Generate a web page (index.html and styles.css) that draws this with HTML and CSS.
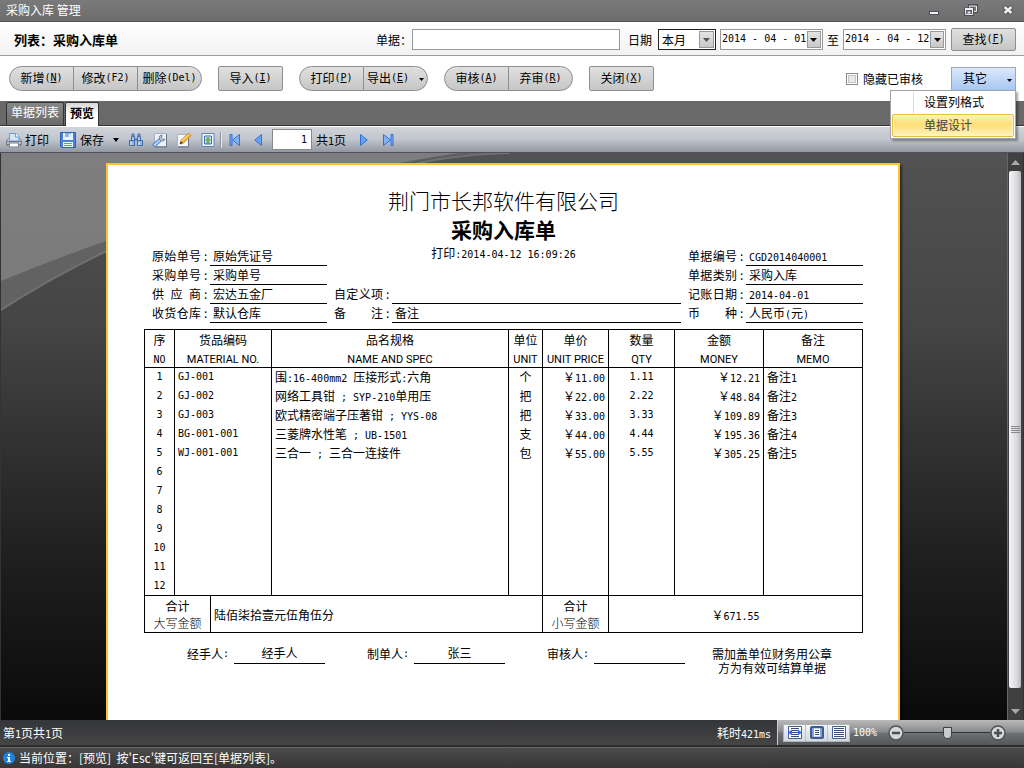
FILE: index.html
```html
<!DOCTYPE html>
<html lang="zh-CN">
<head>
<meta charset="utf-8">
<title>采购入库 管理</title>
<link rel="stylesheet" href="styles.css">
</head>
<body>
<div class="window">
  <header class="titlebar">
    <span class="titlebar-text">采购入库 管理</span>
    <div class="window-buttons">
      <button type="button" aria-label="最小化"><svg width="12" height="12" viewBox="0 0 12 12"><rect x="1.500" y="7.500" width="9" height="3" fill="#f4f4f4" stroke="#4c4c58"/></svg></button>
      <button type="button" aria-label="还原"><svg width="14" height="12" viewBox="0 0 14 12"><path d="M5.500 1.500h7v6h-7z" fill="#777" stroke="#4c4c58" stroke-width="3"/><path d="M5.500 2h7v5.500h-7z" fill="#777" stroke="#eee"/><path d="M1.500 5h7v5.500h-7z" fill="#777" stroke="#4c4c58" stroke-width="3"/><path d="M1.500 5h7v5.500h-7z" fill="#5b5b66" stroke="#eee"/><path d="M1 5h8M3.500 8.500h3" stroke="#eee" stroke-width="2"/></svg></button>
      <button type="button" aria-label="关闭"><svg width="12" height="12" viewBox="0 0 12 12"><path d="M2 2.500l8 7M10 2.500l-8 7" stroke="#4c4c58" stroke-width="4"/><path d="M2.500 3l7 6M9.500 3l-7 6" stroke="#f4f4f4" stroke-width="2.400"/></svg></button>
    </div>
  </header>

  <form class="filterbar">
    <h1 class="filter-title">列表：采购入库单</h1>
    <label for="bill">单据：</label>
    <input class="bill-input" id="bill" type="text">
    <label class="date-label" for="range">日期</label>
    <span class="picker picker-dark">
      <select id="range"><option>本月</option></select>
      <span class="picker-arrow"><svg width="7" height="4"><path d="M0 0h7L3.500 4z" fill="#555"/></svg></span>
    </span>
    <span class="picker picker-date">
      <input class="m" type="text" value="2014 - 04 - 01" aria-label="开始日期">
      <button type="button" class="drop" aria-label="选择开始日期"><svg width="7" height="4"><path d="M0 0h7L3.500 4z"/></svg></button>
    </span>
    <span>至</span>
    <span class="picker picker-date">
      <input class="m" type="text" value="2014 - 04 - 12" aria-label="结束日期">
      <button type="button" class="drop" aria-label="选择结束日期"><svg width="7" height="4"><path d="M0 0h7L3.500 4z"/></svg></button>
    </span>
    <button type="button" class="btn find">查找<span class="m">(<u>F</u>)</span></button>
  </form>

  <div class="actionbar">
    <div class="group">
      <button type="button" class="btn">新增<span class="m">(<u>N</u>)</span></button>
      <button type="button" class="btn">修改<span class="m">(F2)</span></button>
      <button type="button" class="btn">删除<span class="m">(Del)</span></button>
    </div>
    <button type="button" class="btn">导入<span class="m">(<u>I</u>)</span></button>
    <div class="group">
      <button type="button" class="btn">打印<span class="m">(<u>P</u>)</span></button>
      <button type="button" class="btn btn-drop">导出<span class="m">(<u>E</u>)</span><svg width="5" height="3"><path d="M0 0h5L2.500 3z"/></svg></button>
    </div>
    <div class="group">
      <button type="button" class="btn">审核<span class="m">(<u>A</u>)</span></button>
      <button type="button" class="btn">弃审<span class="m">(<u>R</u>)</span></button>
    </div>
    <button type="button" class="btn">关闭<span class="m">(<u>X</u>)</span></button>
    <label class="hide-audited"><input type="checkbox">隐藏已审核</label>
    <div class="other">
      <button type="button" class="other-btn">其它<svg width="5" height="3"><path d="M0 0h5L2.500 3z"/></svg></button>
      <div class="menu">
        <button type="button" class="menu-item">设置列格式</button>
        <button type="button" class="menu-item menu-item-active">单据设计</button>
      </div>
    </div>
  </div>

  <nav class="tabs">
    <button type="button" class="tab">单据列表</button>
    <button type="button" class="tab tab-active">预览</button>
  </nav>

  <div class="previewbar">
    <button type="button" class="tool tool-print">
      <svg width="16" height="16" viewBox="0 0 16 16"><rect x="1" y="7" width="14" height="7" rx="1.500" fill="#e9edf2" stroke="#69717e"/><path d="M3.500 9V1.500h6.500l3 3V9z" fill="#d4e6fa" stroke="#6b9ad2"/><path d="M9.500 1.500v3.500H13" fill="#fff" stroke="#6b9ad2"/><path d="M0.500 9.500h15v3H.500z" fill="#b8c0c9" stroke="#727b86"/><path d="M3.500 11h9v4h-9z" fill="#fff" stroke="#7b838e"/></svg>打印</button>
    <button type="button" class="tool tool-save">
      <svg width="16" height="16" viewBox="0 0 16 16"><path d="M.500 .500h15v15h-14l-1-1z" fill="#4c82d6" stroke="#2f62b5"/><path d="M3 1h10v7H3z" fill="#eaf2fc"/><path d="M5 1h6v4H5z" fill="#8fb1e4"/><path d="M9 2h1.500v3H9z" fill="#fff"/><path d="M3 10h10v5H3z" fill="#eef6e8"/><path d="M4 11.500h8M4 13.500h8" stroke="#62b04b"/></svg>保存</button>
    <button type="button" class="tool-caret" aria-label="保存选项"><svg width="6" height="4"><path d="M0 0h6L3 4z"/></svg></button>
    <button type="button" class="tool-icon" aria-label="查找"><svg width="16" height="16" viewBox="0 0 16 16"><path d="M4 2h2v2H4zM10 2h2v2h-2z" fill="#9dc0ea" stroke="#416da8"/><path d="M3.500 4.500h3v4h-3zM9.500 4.500h3v4h-3z" fill="#a9c9ef" stroke="#416da8"/><path d="M1.500 8.500h5v5h-5zM9.500 8.500h5v5h-5z" fill="#8fb6e6" stroke="#416da8"/><path d="M6.500 6.500h3v2h-3z" fill="#4778b7"/><path d="M3 10v3M11 10v3" stroke="#e2effc"/></svg></button>
    <button type="button" class="tool-icon" aria-label="参数"><svg width="16" height="16" viewBox="0 0 16 16"><path d="M2.500 1.500h12v13h-12z" fill="#edf2f9" stroke="#a3b0c6"/><path d="M14.500 2v13H3" fill="none" stroke="#66758e"/><path d="M2.500 13L7.500 8.500" stroke="#4b7fc9" stroke-width="4" stroke-linecap="round"/><path d="M2.500 13L7.500 8.500" stroke="#b7d6fa" stroke-width="2" stroke-linecap="round"/><path d="M10 3a3 3 0 1 0 3 4l-2 .500-1.500-1.500z" fill="#c5cdd6" stroke="#778391"/></svg></button>
    <button type="button" class="tool-icon" aria-label="编辑"><svg width="16" height="16" viewBox="0 0 16 16"><path d="M1.500 2.500h11v12h-11z" fill="#f5f8fc" stroke="#a3b0c6"/><path d="M12.500 6v9H2" fill="none" stroke="#66758e"/><path d="M5 8.500L12.500 1l2.500 2.500L7.500 11l-3.500 1z" fill="#f4b63f" stroke="#c98a34"/><path d="M6.500 8.500l6-6" stroke="#fde49b"/><path d="M4 12l.800-2.500 2 1.500z" fill="#222"/></svg></button>
    <button type="button" class="tool-icon" aria-label="页面设置"><svg width="14" height="16" viewBox="0 0 14 16"><path d="M1 1.500h12v13H1z" fill="#f6faff" stroke="#5e83b6"/><path d="M3.500 4h7v8h-7z" fill="#bddcf7" stroke="#3f72b0"/><path d="M7 5l2.500 4h-5z" fill="#67a32d"/><circle cx="7" cy="7.500" r="2" fill="#77b039"/><path d="M7 9v2M5 11h4" stroke="#607f2d"/></svg></button>
    <span class="separator"></span>
    <button type="button" class="tool-icon" aria-label="首页"><svg width="11" height="12" viewBox="0 0 11 12"><path d="M1 .500h2v11H1z" fill="#83b2f3" stroke="#2e6fdb"/><path d="M10.500 .500v11L3.500 6z" fill="#83b2f3" stroke="#2e6fdb"/></svg></button>
    <button type="button" class="tool-icon" aria-label="上一页"><svg width="8" height="12" viewBox="0 0 8 12"><path d="M7.500 .500v11L.800 6z" fill="#6aa2f2" stroke="#2e6fdb"/></svg></button>
    <input class="page-input m" type="text" value="1" aria-label="页码">
    <span class="page-total">共<span class="m">1</span>页</span>
    <button type="button" class="tool-icon" aria-label="下一页"><svg width="8" height="12" viewBox="0 0 8 12"><path d="M.500 .500v11L7.200 6z" fill="#6aa2f2" stroke="#2e6fdb"/></svg></button>
    <button type="button" class="tool-icon" aria-label="末页"><svg width="11" height="12" viewBox="0 0 11 12"><path d="M8 .500h2v11H8z" fill="#83b2f3" stroke="#2e6fdb"/><path d="M.500 .500v11L7.500 6z" fill="#83b2f3" stroke="#2e6fdb"/></svg></button>
  </div>

  <main class="preview">
    <svg class="backdrop" viewBox="0 0 1006 567" preserveAspectRatio="none" aria-hidden="true">
      <defs>
        <linearGradient id="dark" x1="0" y1="0" x2="0" y2="1"><stop offset="0" stop-color="#525252"/><stop offset=".3" stop-color="#454545"/><stop offset=".7" stop-color="#202020"/><stop offset="1" stop-color="#0a0a0a"/></linearGradient>
        <linearGradient id="light" gradientUnits="userSpaceOnUse" x1="0" y1="0" x2="0" y2="130"><stop offset="0" stop-color="#7e7e7e"/><stop offset="1" stop-color="#7b7b7b"/></linearGradient>
      </defs>
      <rect width="1006" height="567" fill="url(#dark)"/>
      <path d="M0 0H500Q420 0 370 20Q220 52 106 97Q50 124 0 157z" fill="#626262"/>
      <path d="M500 0Q430 2 380 18Q220 52 106 97Q50 124 0 157" fill="none" stroke="#707070" stroke-width="2"/>
      <path d="M0 0H450Q300 22 106 87Q50 107 0 128z" fill="url(#light)"/>
    </svg>
    <div class="page-area">
      <article class="paper">
        <h2 class="company">荆门市长邦软件有限公司</h2>
        <h3 class="doc-title">采购入库单</h3>
        <p class="printed">打印<span class="m">:2014-04-12 16:09:26</span></p>

        <div class="info">
          <div class="info-col info-left">
            <span class="name"><span>原始单号</span>:</span><span class="value">原始凭证号</span>
            <span class="name"><span>采购单号</span>:</span><span class="value">采购单号</span>
            <span class="name"><span>供 应 商</span>:</span><span class="value">宏达五金厂</span>
            <span class="name"><span>收货仓库</span>:</span><span class="value">默认仓库</span>
          </div>
          <div class="info-col info-mid">
            <span class="name"><span>自定义项</span>:</span><span class="value"></span>
            <span class="name"><span>备 注</span>:</span><span class="value">备注</span>
          </div>
          <div class="info-col info-right">
            <span class="name"><span>单据编号</span>:</span><span class="value"><span class="m">CGD2014040001</span></span>
            <span class="name"><span>单据类别</span>:</span><span class="value">采购入库</span>
            <span class="name"><span>记账日期</span>:</span><span class="value"><span class="m">2014-04-01</span></span>
            <span class="name"><span>币 种</span>:</span><span class="value">人民币<span class="m">(</span>元<span class="m">)</span></span>
          </div>
        </div>

        <table class="items">
          <colgroup><col class="c-no"><col class="c-sum"><col class="c-code"><col class="c-name"><col class="c-unit"><col class="c-price"><col class="c-qty"><col class="c-money"><col class="c-memo"></colgroup>
          <thead>
            <tr>
              <th>序<br><span class="m">NO</span></th>
              <th colspan="2">货品编码<br><span class="en">MATERIAL NO.</span></th>
              <th>品名规格<br><span class="en">NAME AND SPEC</span></th>
              <th>单位<br><span class="en">UNIT</span></th>
              <th>单价<br><span class="en">UNIT PRICE</span></th>
              <th>数量<br><span class="en">QTY</span></th>
              <th>金额<br><span class="en">MONEY</span></th>
              <th>备注<br><span class="en">MEMO</span></th>
            </tr>
          </thead>
          <tbody>
            <tr><td class="m">1</td><td colspan="2" class="m">GJ-001</td><td>围<span class="m">:16-400mm2 </span>压接形式<span class="m">:</span>六角</td><td>个</td><td>￥<span class="m">11.00</span></td><td class="m">1.11</td><td>￥<span class="m">12.21</span></td><td>备注<span class="m">1</span></td></tr>
            <tr><td class="m">2</td><td colspan="2" class="m">GJ-002</td><td>网络工具钳<span class="m"> ; SYP-210</span>单用压</td><td>把</td><td>￥<span class="m">22.00</span></td><td class="m">2.22</td><td>￥<span class="m">48.84</span></td><td>备注<span class="m">2</span></td></tr>
            <tr><td class="m">3</td><td colspan="2" class="m">GJ-003</td><td>欧式精密端子压著钳<span class="m"> ; YYS-08</span></td><td>把</td><td>￥<span class="m">33.00</span></td><td class="m">3.33</td><td>￥<span class="m">109.89</span></td><td>备注<span class="m">3</span></td></tr>
            <tr><td class="m">4</td><td colspan="2" class="m">BG-001-001</td><td>三菱牌水性笔<span class="m"> ; UB-1501</span></td><td>支</td><td>￥<span class="m">44.00</span></td><td class="m">4.44</td><td>￥<span class="m">195.36</span></td><td>备注<span class="m">4</span></td></tr>
            <tr><td class="m">5</td><td colspan="2" class="m">WJ-001-001</td><td>三合一<span class="m"> ; </span>三合一连接件</td><td>包</td><td>￥<span class="m">55.00</span></td><td class="m">5.55</td><td>￥<span class="m">305.25</span></td><td>备注<span class="m">5</span></td></tr>
            <tr><td class="m">6</td><td colspan="2"></td><td></td><td></td><td></td><td></td><td></td><td></td></tr>
            <tr><td class="m">7</td><td colspan="2"></td><td></td><td></td><td></td><td></td><td></td><td></td></tr>
            <tr><td class="m">8</td><td colspan="2"></td><td></td><td></td><td></td><td></td><td></td><td></td></tr>
            <tr><td class="m">9</td><td colspan="2"></td><td></td><td></td><td></td><td></td><td></td><td></td></tr>
            <tr><td class="m">10</td><td colspan="2"></td><td></td><td></td><td></td><td></td><td></td><td></td></tr>
            <tr><td class="m">11</td><td colspan="2"></td><td></td><td></td><td></td><td></td><td></td><td></td></tr>
            <tr><td class="m">12</td><td colspan="2"></td><td></td><td></td><td></td><td></td><td></td><td></td></tr>
          </tbody>
          <tfoot>
            <tr>
              <th colspan="2">合计<br><span class="kai">大写金额</span></th>
              <td colspan="3" class="words">陆佰柒拾壹元伍角伍分</td>
              <th>合计<br><span class="kai">小写金额</span></th>
              <td colspan="3" class="total">￥<span class="m">671.55</span></td>
            </tr>
          </tfoot>
        </table>

        <div class="signs">
          <div class="sign">经手人<span class="m">:</span><span class="sign-line">经手人</span></div>
          <div class="sign">制单人<span class="m">:</span><span class="sign-line">张三</span></div>
          <div class="sign">审核人<span class="m">:</span><span class="sign-line"></span></div>
          <p class="notice">需加盖单位财务用公章<br>方为有效可结算单据</p>
        </div>
      </article>
    </div>
    <div class="scrollbar">
      <button type="button" aria-label="向上滚动"><svg width="9" height="5"><path d="M0 5h9L4.500 0z" fill="#aaa"/></svg></button>
      <div class="thumb"><span class="grip"></span></div>
      <button type="button" aria-label="向下滚动"><svg width="9" height="5"><path d="M0 0h9L4.500 5z" fill="#aaa"/></svg></button>
    </div>
  </main>

  <div class="statusbar">
    <span>第<span class="m">1</span>页共<span class="m">1</span>页</span>
    <span class="elapsed">耗时<span class="m">421ms</span></span>
    <div class="zoombar">
      <div class="views">
        <button type="button" aria-label="适合宽度"><svg width="14" height="13" viewBox="0 0 14 13"><path d="M.500 .500h13v12H.500z" fill="#fff" stroke="#44618f"/><path d="M3 2.500h8M4 4.500h6M4 6.500h6M4 8.500h6M3 10.500h8" stroke="#36507c"/><path d="M0 6.500l4-3v6zM14 6.500l-4-3v6z" fill="#2f6de0"/></svg></button>
        <button type="button" aria-label="整页"><svg width="14" height="13" viewBox="0 0 14 13"><rect x="1" y="1" width="12" height="11" rx="1" fill="#86a3d2" stroke="#3d5d92" stroke-width="2"/><path d="M4 2.500h6v8H4z" fill="#fff"/><path d="M5 4.500h4M5 6.500h4M5 8.500h4" stroke="#36507c"/></svg></button>
        <button type="button" aria-label="实际大小"><svg width="14" height="13" viewBox="0 0 14 13"><path d="M.500 .500h13v12H.500z" fill="#fff" stroke="#44618f"/><path d="M2 2.500h10M2 4.500h10M2 6.500h10M2 8.500h10M2 10.500h10" stroke="#36507c"/></svg></button>
      </div>
      <span class="m percent">100%</span>
      <button type="button" class="round" aria-label="缩小"><svg width="16" height="16" viewBox="0 0 16 16"><circle cx="8" cy="8" r="7" fill="#d5d7d9" stroke="#4f5357" stroke-width="1.500"/><path d="M4 8h8" stroke="#4b4f54" stroke-width="2.500"/></svg></button>
      <input class="slider" type="range" min="0" max="100" value="50" aria-label="缩放">
      <button type="button" class="round" aria-label="放大"><svg width="16" height="16" viewBox="0 0 16 16"><circle cx="8" cy="8" r="7" fill="#d5d7d9" stroke="#4f5357" stroke-width="1.500"/><path d="M4 8h8M8 4v8" stroke="#4b4f54" stroke-width="2.500"/></svg></button>
    </div>
  </div>

  <footer class="footer">
    <svg width="12" height="12" viewBox="0 0 12 12"><circle cx="6" cy="6" r="6" fill="#1c83e0"/><path d="M5 2h2v2H5zM4 5h3v4h1v1H4V9h1V6H4z" fill="#fff"/></svg>
    <span>当前位置：[预览]&nbsp; 按'Esc'键可返回至[单据列表]。</span>
  </footer>
</div>
</body>
</html>
```

FILE: styles.css
```css
* { box-sizing: border-box; }

body {
  margin: 0;
  font: 12px/18px "Noto Sans CJK SC", sans-serif;
  color: #000;
}

button, input, select { font: inherit; color: inherit; margin: 0; padding: 0; }
button { border: 0; background: none; }
svg { display: block; flex: none; }
h1, h2, h3, p { margin: 0; font: inherit; }

.m { font-family: "DejaVu Sans Mono", monospace; font-size: 10px; line-height: 12px; white-space: pre; }

.window { display: flex; flex-direction: column; height: 100vh; min-height: 600px; background: #fff; overflow: hidden; }

/* title bar */
.titlebar {
  display: flex; align-items: center; justify-content: space-between;
  flex: none; height: 22px; padding: 0 10px 2px 6px;
  background: linear-gradient(#7a7a7a, #6c6c6c);
  border-bottom: 1px solid #555;
  color: #fff;
}
.window-buttons { display: flex; gap: 24px; }

/* filter row */
.filterbar {
  display: flex; align-items: center; flex: none;
  height: 34px; padding: 2px 8px 0 14px;
  background: linear-gradient(#fff, #f2f2f2);
  border-bottom: 1px solid #9c9c9c;
}
.filter-title { flex: 1; font-size: 13px; font-weight: bold; }
.filterbar label { white-space: nowrap; }
.bill-input { width: 208px; height: 21px; border: 1px solid #999; background: #fff; }
.date-label { margin: 0 6px 0 8px; }
.picker { display: flex; position: relative; height: 21px; border: 1px solid #999; background: #fff; padding: 1px; }
.picker select { width: 54px; border: 0; padding: 0 0 2px 2px; background: none; appearance: none; outline: none; }
.picker input { flex: 1; min-width: 0; border: 0; padding: 0 0 2px; outline: none; background: none; }
.picker-dark { width: 58px; border-color: #222; margin-right: 4px; }
.picker-date { width: 103px; margin-right: 4px; }
.picker-date + span { margin-right: 4px; }
.picker-arrow, .drop {
  display: flex; align-items: center; justify-content: center;
  width: 15px; border: 1px solid #999;
  background: linear-gradient(#e4e4e4, #c8c8c8);
}
.drop { flex: none; width: 14px; }
.picker-arrow { position: absolute; top: 1px; right: 1px; bottom: 1px; pointer-events: none; }

/* buttons */
.btn {
  display: flex; align-items: center; justify-content: center;
  width: 65px; height: 25px; padding-bottom: 2px;
  border: 1px solid #8e8e8e; border-radius: 2px;
  background: linear-gradient(#e0e0e0, #c6c6c6);
  white-space: nowrap;
}
.find { height: 23px; margin-left: 1px; }

.actionbar { display: flex; align-items: center; flex: none; gap: 16px; height: 45px; padding: 0 8px 0 9px; }
.group { display: flex; }
.group .btn { border-radius: 0; }
.group .btn + .btn { margin-left: -1px; }
.group .btn:first-child { border-radius: 13px 0 0 13px; }
.group .btn:last-child { border-radius: 0 13px 13px 0; }
.btn-drop svg { margin: 4px 0 0 10px; }
.hide-audited { display: flex; align-items: center; gap: 5px; margin-left: auto; white-space: nowrap; }
.hide-audited input {
  appearance: none; width: 12px; height: 12px; margin: 0;
  border: 1px solid #8c8c8c; background: #e8e8e8; box-shadow: inset 0 0 0 1px #fff, inset 0 0 0 2px #c4c8cc;
}
.other { position: relative; align-self: stretch; padding-top: 11px; margin-left: 12px; }
.other-btn {
  display: flex; align-items: center; justify-content: flex-end; gap: 20px;
  width: 65px; height: 24px; padding: 0 3px 3px 0;
  border: 1px solid #9ea7b5; border-bottom: 0;
  background: linear-gradient(#dce9fb, #a3c5f1);
}
.other-btn svg { margin-top: 4px; }
.menu {
  position: absolute; z-index: 5; top: 34px; right: 0;
  display: flex; flex-direction: column;
  width: 126px; padding: 1px;
  border: 1px solid #9fa3ac;
  background: #fff;
  box-shadow: 2px 2px 2px rgba(0, 0, 0, .35);
}
.menu-item { height: 22px; padding: 0 0 2px 32px; text-align: left; }
.menu-item:first-child { background: linear-gradient(#ddd, #ddd) 21px 0 / 1px 100% no-repeat; }
.menu-item-active {
  height: 23px; border: 1px solid #e9bd3b; border-radius: 2px;
  background: linear-gradient(#fff2b8, #fddf76 45%, #fff3bf);
  color: #444; padding-left: 31px;
  box-shadow: inset 0 0 0 1px #fff3c8;
}

/* tabs */
.tabs { display: flex; align-items: flex-end; gap: 1px; flex: none; height: 25px; padding-left: 6px; background: #696969; border-bottom: 1px solid #333; }
.tab {
  height: 23px; padding: 0 4px 4px;
  border: 1px solid #333; border-bottom: 0; border-radius: 2px 2px 0 0;
  background: linear-gradient(#888, #6a6a6a); color: #fff;
}
.tab-active { background: linear-gradient(#d8d8d8, #fff 50%); color: #000; font-weight: bold; margin-bottom: -1px; height: 24px; }

/* preview toolbar */
.previewbar {
  display: flex; align-items: center; flex: none;
  height: 27px; padding-left: 6px;
  background: linear-gradient(#d2d5da, #c0c4cc 50%, #9298a2);
  border-top: 1px solid #fff; border-bottom: 1px solid #4a505c;
}
.tool { display: flex; align-items: center; gap: 3px; white-space: nowrap; }
.tool-save { margin-left: 11px; gap: 4px; }
.tool-caret, .tool-icon { display: flex; justify-content: center; align-items: center; height: 22px; width: 24px; flex: none; }
.tool-caret { width: 20px; padding-left: 4px; }
.separator { width: 2px; height: 16px; border-left: 1px solid #8c919b; border-right: 1px solid #e8eaee; }
.page-input { width: 40px; height: 21px; margin: 0 4px 0 2px; padding: 0 4px; border: 1px solid #888; background: #fff; text-align: right; }
.page-total { margin-right: 6px; }

/* preview area */
.preview { position: relative; display: flex; flex: 1; min-height: 0; border-left: 1px solid #333; background: #222; overflow: hidden; }
.backdrop { position: absolute; inset: 0; width: 100%; height: 100%; }
.page-area { position: relative; flex: 1; padding: 10px 2px 0 0; display: flex; justify-content: center; align-items: flex-start; }
.paper {
  width: 794px; min-height: 1123px; padding: 22px 35px 0 36px;
  border: 2px solid #fec22f; background: #fff;
  box-shadow: 2px 2px 2px rgba(0, 0, 0, .5);
}
.company, .doc-title { font-size: 21px; line-height: 26px; text-align: center; }
.company { font-weight: 300; }
.doc-title { font-weight: bold; line-height: 32px; }
.printed { text-align: center; line-height: 16px; margin-bottom: -14px; }

.info { display: grid; grid-template-columns: 175px 1fr 175px; gap: 7px; padding-left: 8px; align-items: end; }
.info-col { display: grid; grid-template-columns: 58px 1fr; grid-auto-rows: 19px; line-height: 18px; }
.name { display: flex; gap: 3px; }
.name span { width: 49px; text-align: justify; text-align-last: justify; }
.value { border-bottom: 1px solid #000; padding-left: 3px; }

/* item table */
.items { width: 100%; margin-top: 6px; table-layout: fixed; border-collapse: collapse; border: 1px solid #000; line-height: 18px; }
.c-no { width: 30px; } .c-sum { width: 36px; } .c-code { width: 61px; } .c-name { width: 237px; } .c-unit { width: 34px; }
.c-price { width: 66px; } .c-qty { width: 66px; } .c-money { width: 89px; } .c-memo { width: 99px; }
.items th, .items td { padding: 0 3px; border: solid #000; border-width: 0 1px; font-weight: normal; white-space: nowrap; }
.items thead th { height: 38px; padding: 0; border-width: 1px; text-align: center; }
.items td { height: 19px; }
.items tbody td:nth-child(1), .items tbody td:nth-child(4), .items tbody td:nth-child(6) { text-align: center; }
.items tbody td:nth-child(5), .items tbody td:nth-child(7) { text-align: right; }
.items tfoot th, .items tfoot td { height: 37px; padding: 0 3px; border-width: 1px; line-height: 17px; }
.items tfoot .total { text-align: center; }
.en { font: 11px/12px Roboto, sans-serif; }
.kai { font-weight: 300; }

/* signatures */
.signs { display: flex; padding: 11px 0 0 43px; line-height: 18px; }
.sign { display: flex; align-items: center; width: 180px; height: 20px; }
.sign:nth-child(3) { width: 165px; }
.sign-line { width: 91px; height: 20px; margin-left: 5px; border-bottom: 1px solid #000; text-align: center; }
.notice { line-height: 14px; padding-top: 3px; text-align: center; white-space: nowrap; }

/* scrollbar */
.scrollbar { position: relative; display: flex; flex-direction: column; flex: none; width: 17px; padding: 0 2px 0 1px; background: #404040; border-left: 1px solid #666; border-right: 1px solid #333; }
.scrollbar button { display: flex; align-items: center; justify-content: center; height: 18px; }
.thumb { flex: 1; display: flex; align-items: center; justify-content: center; margin-bottom: 14px; border-radius: 2px; background: linear-gradient(90deg, #f5f5f5, #dcdde0 60%, #b9babf); }
.grip { width: 9px; height: 7px; background: repeating-linear-gradient(#888 0 1px, transparent 1px 2px); }

/* status bar */
.statusbar { display: flex; align-items: center; flex: none; height: 25px; padding-left: 3px; background: linear-gradient(#35363a, #454545); color: #fff; }
.elapsed { margin: 0 6px 0 auto; }
.zoombar { display: flex; align-items: center; align-self: stretch; width: 247px; padding: 0 18px 0 5px; border-left: 1px solid #ccc; background: linear-gradient(#b9b9b9, #8b8d8f 45%, #6b6f72 55%, #55585b); }
.views { display: flex; border: 1px solid #aeb4ba; background: linear-gradient(#f3f5f6, #d3d9dc); }
.views button { display: flex; align-items: center; justify-content: center; width: 21px; height: 16px; }
.views button + button { width: 22px; border-left: 1px solid #bcc2c6; }
.percent { margin: 0 auto 0 3px; }
.slider { appearance: none; width: 86px; height: 16px; margin: 0; background: linear-gradient(#333, #333) center / 100% 1px no-repeat; }
.slider::-webkit-slider-thumb { appearance: none; width: 9px; height: 12px; border: 1px solid #3c4043; border-radius: 1px 1px 5px 5px; background: #c9cbcd; }

.footer { display: flex; align-items: center; gap: 4px; flex: none; height: 23px; padding-left: 3px; background: linear-gradient(#4c4c4c, #363636); border-top: 2px solid #2c2c2c; box-shadow: inset 0 1px #666; color: #fff; }
```
